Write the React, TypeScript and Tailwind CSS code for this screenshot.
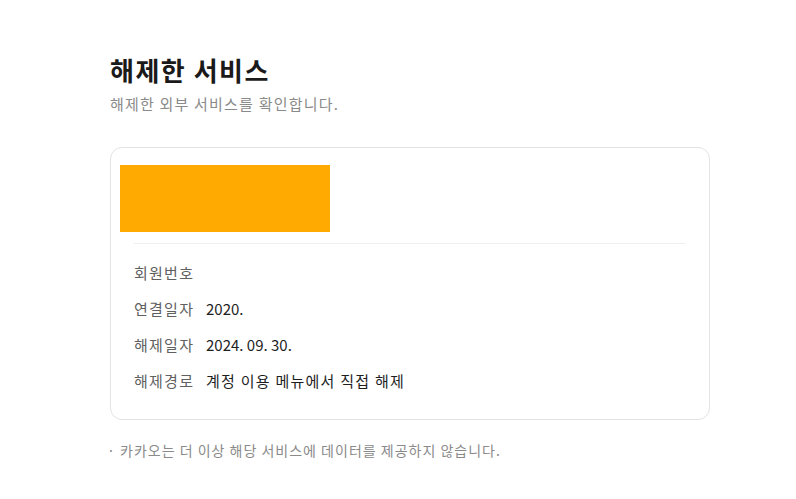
import React from "react";

const rows: { label: string; value: string; hangul: boolean }[] = [
  { label: "회원번호", value: "", hangul: false },
  { label: "연결일자", value: "2020.", hangul: false },
  { label: "해제일자", value: "2024. 09. 30.", hangul: false },
  { label: "해제경로", value: "계정 이용 메뉴에서 직접 해제", hangul: true },
];

export default function App() {
  return (
    <div
      className="min-h-[499px] w-full bg-white pl-[110px] pt-[52px]"
      style={{ fontFamily: '"Noto Sans CJK KR", "Noto Sans", sans-serif' }}
    >
      <div className="w-[600px]">
        <h1 className="whitespace-nowrap text-[26px] font-bold leading-[36px] tracking-[1.5px] text-[#1a1a1a]">해제한 서비스</h1>
        <p className="mt-[5px] whitespace-nowrap text-[15px] leading-[22px] tracking-[1.2px] text-[#8a8a8a]">해제한 외부 서비스를 확인합니다.</p>

        <div className="mt-[32px] rounded-[12px] border border-[#e3e3e3] bg-white pb-[27px] pt-[17px]">
          <div className="ml-[9px] h-[67px] w-[210px] bg-[#ffaa00]" />
          <div className="mx-[23px] mt-[11px] h-px bg-[#f0f0f0]" />
          <div className="mt-[18px] flex flex-col gap-[14px] px-[23px]">
            {rows.map((r) => (
              <div key={r.label} className="flex h-[22px] items-center whitespace-nowrap text-[15px] leading-[22px]">
                <span className="w-[72px] shrink-0 tracking-[1.25px] text-[#606060]">{r.label}</span>
                <span className={r.hangul ? "tracking-[1.25px] text-[#1e1e1e]" : "text-[#1e1e1e]"}>{r.value}</span>
              </div>
            ))}
          </div>
        </div>

        <p className="mt-[20px] flex whitespace-nowrap text-[14px] leading-[20px] text-[#8a8a8a]">
          <span className="-ml-[3px] w-[13px] shrink-0">·</span>
          <span className="tracking-[1px]">카카오는 더 이상 해당 서비스에 데이터를 제공하지 않습니다.</span>
        </p>
      </div>
    </div>
  );
}
